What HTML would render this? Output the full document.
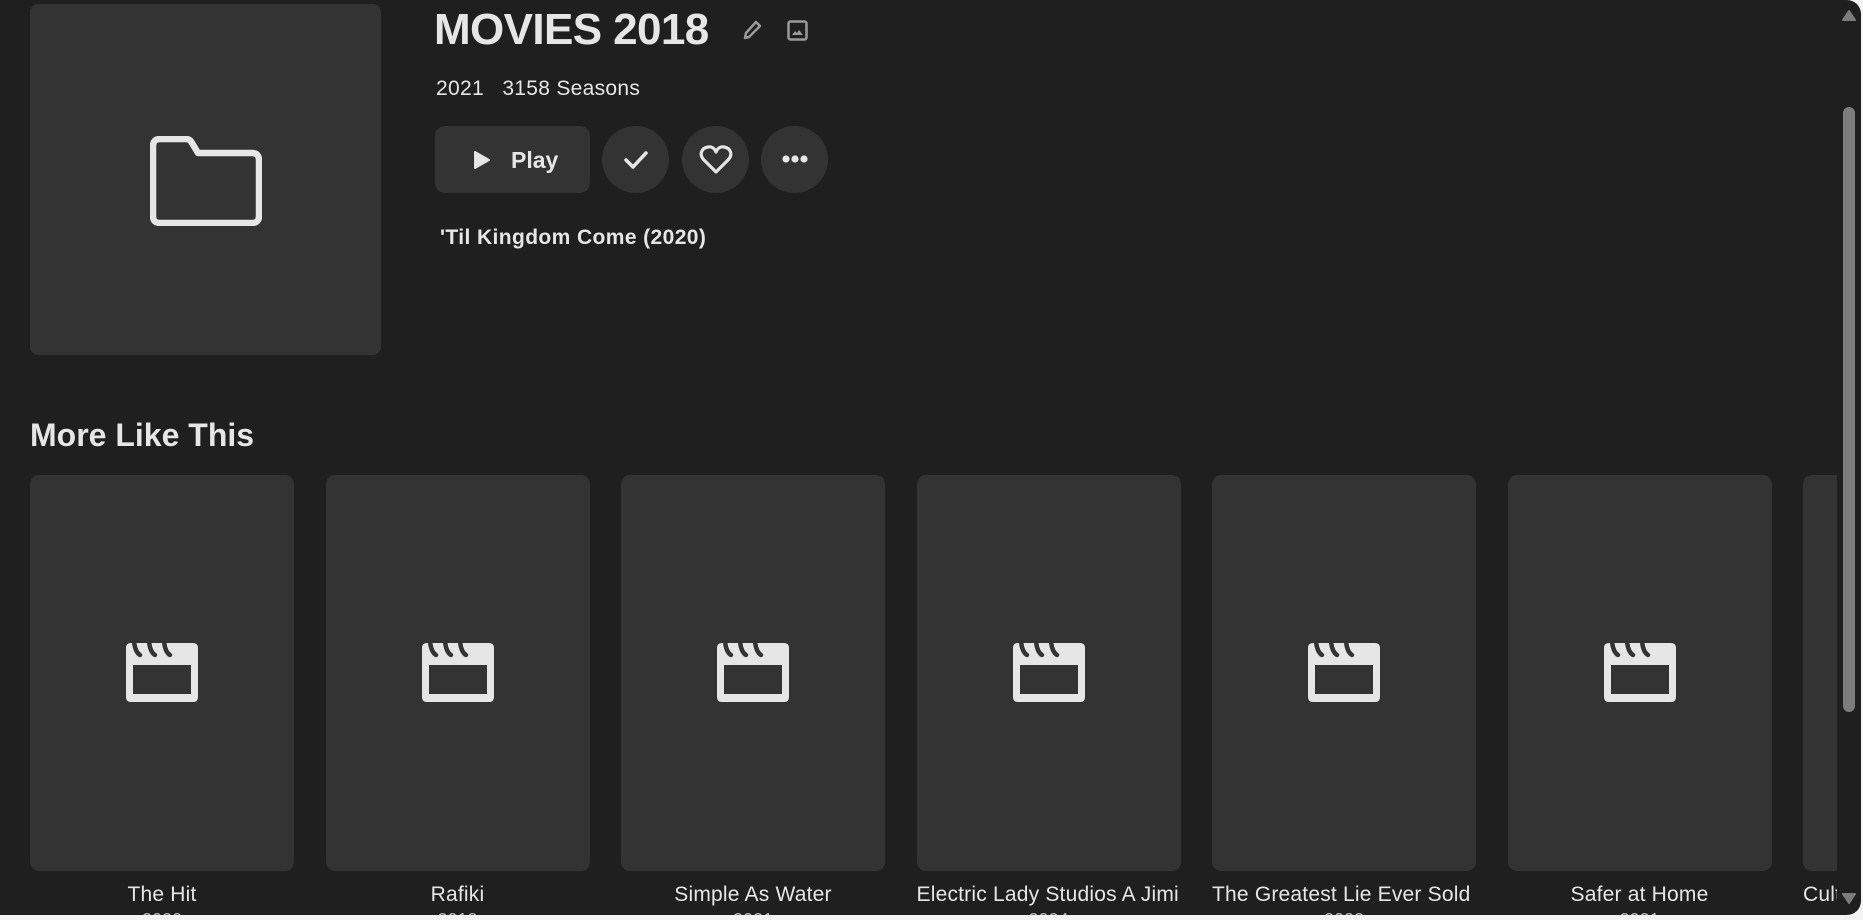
<!DOCTYPE html>
<html><head><meta charset="utf-8"><style>
html,body{margin:0;padding:0;width:1863px;height:920px;overflow:hidden;background:#f4f4f4;font-family:"Liberation Sans",sans-serif;}
.win{position:absolute;left:0;top:0;width:1861px;height:915px;background:#1f1f1f;border-radius:0 14px 14px 0;overflow:hidden;color:#e6e6e6;}
.poster{position:absolute;left:30px;top:4px;width:351px;height:351px;background:#333;border-radius:8px;}
.title{position:absolute;left:434px;top:5px;font-size:44px;font-weight:bold;letter-spacing:-0.6px;white-space:nowrap;}
.meta{position:absolute;left:436px;top:77px;font-size:21px;letter-spacing:0.3px;white-space:nowrap;}
.play{position:absolute;left:435px;top:126px;width:155px;height:67px;background:#333;border-radius:10px;}
.play span{position:absolute;left:76px;top:21px;font-size:23px;font-weight:bold;}
.circ{position:absolute;top:126px;width:67px;height:67px;border-radius:50%;background:#333;}
.tag{position:absolute;left:440px;top:226px;font-size:21px;font-weight:bold;letter-spacing:0.4px;white-space:nowrap;}
.mlt{position:absolute;left:30px;top:417px;font-size:32px;font-weight:bold;white-space:nowrap;}
.row{position:absolute;left:0;top:0;width:1837px;height:915px;overflow:hidden;}
.card{position:absolute;top:475px;width:264px;height:396px;background:#333;border-radius:9px;}
.card svg{position:absolute;left:95px;top:168px;}
.lbl{position:absolute;top:883px;width:264px;text-align:center;font-size:21px;letter-spacing:0.2px;white-space:nowrap;overflow:hidden;}
.yr{position:absolute;top:910px;width:264px;text-align:center;font-size:18px;color:#bbb;}
.sb{position:absolute;left:1843px;top:107px;width:12px;height:605px;background:#7c7c7c;border-radius:6px;}
</style></head><body><div class="win">
<div class="poster"><svg style="position:absolute;left:120px;top:132px" width="112" height="90" viewBox="0 0 112 90"><path d="M10 3 H36 Q40 3 42 7 L48 17 H102 Q109 17 109 24 V80 Q109 87 102 87 H10 Q3 87 3 80 V10 Q3 3 10 3 Z" fill="none" stroke="#e6e6e6" stroke-width="6.5" stroke-linejoin="round"/></svg></div>
<div class="title">MOVIES 2018</div>
<svg style="position:absolute;left:741px;top:18px" width="22" height="24" viewBox="0 0 22 24"><path d="M4 20 L5 15 L15 4 L19 8 L8 19 Z" fill="none" stroke="#9a9a9a" stroke-width="2.5" stroke-linejoin="round"/></svg>
<svg style="position:absolute;left:787px;top:20px" width="21" height="21" viewBox="0 0 21 21"><rect x="1.5" y="1.5" width="18" height="18" rx="2" fill="none" stroke="#9a9a9a" stroke-width="2.5"/><path d="M5 15 L8 11 L10 13 L12 10 L16 15 Z" fill="#9a9a9a"/></svg>
<div class="meta">2021&nbsp;&nbsp;&nbsp;3158 Seasons</div>
<div class="play"><svg style="position:absolute;left:38px;top:24px" width="18" height="20" viewBox="0 0 18 20"><path d="M2 2 L16 10 L2 18 Z" fill="#e6e6e6" stroke="#e6e6e6" stroke-width="2" stroke-linejoin="round"/></svg><span>Play</span></div>
<div class="circ" style="left:602px"><svg style="position:absolute;left:21px;top:22px" width="26" height="24" viewBox="0 0 26 24"><path d="M3 12 L10 19 L23 5" fill="none" stroke="#e6e6e6" stroke-width="3.5" stroke-linecap="round" stroke-linejoin="round"/></svg></div>
<div class="circ" style="left:682px"><svg style="position:absolute;left:17px;top:18px" width="34" height="32" viewBox="0 0 34 32"><path d="M17 28 L5 16 C0 11 2 4 9 3 C13 2 16 5 17 8 C18 5 21 2 25 3 C32 4 34 11 29 16 Z" fill="none" stroke="#e6e6e6" stroke-width="3.2" stroke-linejoin="round"/></svg></div>
<div class="circ" style="left:761px"><svg style="position:absolute;left:20px;top:27px" width="28" height="12" viewBox="0 0 28 12"><circle cx="5" cy="6" r="3.6" fill="#e6e6e6"/><circle cx="14" cy="6" r="3.6" fill="#e6e6e6"/><circle cx="23" cy="6" r="3.6" fill="#e6e6e6"/></svg></div>
<div class="tag">'Til Kingdom Come (2020)</div>
<div class="mlt">More Like This</div>
<div class="row">
<div class="card" style="left:30px"></div><div class="card" style="left:325.5px"></div><div class="card" style="left:621px"></div><div class="card" style="left:916.5px"></div><div class="card" style="left:1212px"></div><div class="card" style="left:1507.5px"></div><div class="card" style="left:1803px"></div>
<div class="lbl" style="left:30px">The Hit</div><div class="lbl" style="left:325.5px">Rafiki</div><div class="lbl" style="left:621px">Simple As Water</div><div class="lbl" style="left:916.5px;text-align:left">Electric Lady Studios A Jimi</div><div class="lbl" style="left:1212px;text-align:left">The Greatest Lie Ever Sold</div><div class="lbl" style="left:1507.5px">Safer at Home</div><div class="lbl" style="left:1803px;text-align:left">Cult</div>
<div class="yr" style="left:30px">2020</div><div class="yr" style="left:325.5px">2018</div><div class="yr" style="left:621px">2021</div><div class="yr" style="left:916.5px">2024</div><div class="yr" style="left:1212px">2022</div><div class="yr" style="left:1507.5px">2021</div>
</div>
<div class="sb"></div>
<svg style="position:absolute;left:1840px;top:8px" width="18" height="14" viewBox="0 0 18 14"><path d="M3 12 L9 3 L15 12 Z" fill="#7c7c7c" stroke="#7c7c7c" stroke-width="2" stroke-linejoin="round"/></svg>
<svg style="position:absolute;left:1840px;top:892px" width="18" height="14" viewBox="0 0 18 14"><path d="M3 2 L9 11 L15 2 Z" fill="#7c7c7c" stroke="#7c7c7c" stroke-width="2" stroke-linejoin="round"/></svg>
</div>
<script>
document.querySelectorAll('.card').forEach(function(c){c.innerHTML='<svg width="74" height="59" viewBox="0 0 74 59"><path d="M6 0 H68 Q73 0 73 5 V54 Q73 59 68 59 H6 Q1 59 1 54 V5 Q1 0 6 0 Z M8 22 V51 H66 V22 Z" fill="#e6e6e6" fill-rule="evenodd"/><g fill="none" stroke="#333" stroke-width="4.5" stroke-linecap="round"><path d="M9 -2 Q10 9 15 12"/><path d="M24 -2 Q25 9 30 12"/><path d="M39 -2 Q40 9 45 12"/></g></svg>';});
</script>
</body></html>
